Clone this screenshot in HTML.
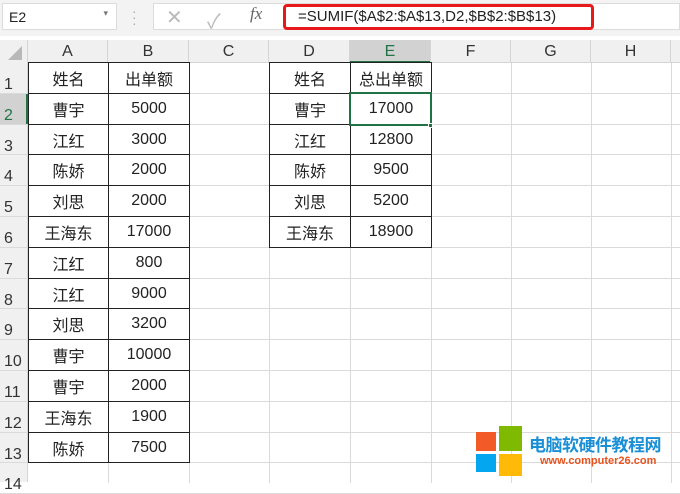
<!DOCTYPE html>
<html><head><meta charset="utf-8"><style>
body{margin:0;width:680px;height:482px;overflow:hidden;background:#fff;font-family:"Liberation Sans","Noto Sans CJK SC",sans-serif;position:relative}
.a{position:absolute;box-sizing:border-box}
.t{font-size:16px;color:#222;display:flex;align-items:center;justify-content:center}
</style></head><body>
<div class="a" style="left:0;top:0;width:680px;height:36px;background:#f3f3f3"></div>
<div class="a" style="left:2px;top:3px;width:115px;height:27px;background:#fff;border:1px solid #dcdcdc;font-size:14px;padding:5px 6px;color:#222">E2<span style="position:absolute;right:8px;top:4px;font-size:9px;color:#777">▾</span></div>
<div class="a" style="left:132px;top:8px;color:#aaa;font-size:14px;line-height:6px">·<br>·<br>·</div>
<div class="a" style="left:153px;top:3px;width:527px;height:27px;background:#fff;border:1px solid #dcdcdc"></div>
<div class="a" style="left:166px;top:5px;color:#bbb;font-size:20px">✕</div>
<div class="a" style="left:207px;top:5px;color:#bbb;font-size:20px">✓</div>
<div class="a" style="left:250px;top:4px;color:#666;font-size:17px;font-style:italic;font-family:'Liberation Serif',serif">fx</div>
<div class="a" style="left:283px;top:4px;width:311px;height:26px;border:3px solid #e8191a;border-radius:4px;font-size:15px;padding:1px 0 0 12px;color:#222">=SUMIF($A$2:$A$13,D2,$B$2:$B$13)</div>
<div class="a" style="left:0;top:40px;width:680px;height:23px;background:#f0f0f0;border-bottom:1px solid #d4d4d4"></div>
<div class="a" style="left:0;top:40px;width:28px;height:442px;background:#f0f0f0;border-right:1px solid #d4d4d4"></div>
<div class="a" style="left:8px;top:46px;width:0;height:0;border-left:14px solid transparent;border-bottom:14px solid #b8b8b8"></div>
<div class="a" style="left:350px;top:40px;width:81px;height:23px;background:#d2d2d2;border-bottom:2px solid #217346"></div>
<div class="a" style="left:0;top:94px;width:28px;height:31px;background:#d2d2d2;border-right:2px solid #217346"></div>
<div id="g"></div>
<script>
var cols=[28,108,189,269,350,431,511,591,671],names="ABCDEFGH",h='';
for(var i=0;i<8;i++){h+='<div class="a t" style="left:'+cols[i]+'px;top:40px;width:'+(cols[i+1]-cols[i])+'px;height:23px;font-size:16px;color:'+(i==4?'#217346':'#333')+';border-right:1px solid #d4d4d4">'+names[i]+'</div>';}
var rt=function(r){return Math.round(63+(r-1)*30.8)};
for(var r=1;r<=14;r++){h+='<div class="a t" style="left:0;top:'+rt(r)+'px;width:28px;height:31px;font-size:16px;color:'+(r==2?'#217346':'#333')+';justify-content:flex-start;padding:6px 0 0 4px;align-items:flex-end">'+r+'</div>';
h+='<div class="a" style="left:0;top:'+(rt(r+1)-1)+'px;width:680px;height:1px;background:#dadada"></div>';}
for(var i=1;i<9;i++)h+='<div class="a" style="left:'+cols[i]+'px;top:63px;width:1px;height:420px;background:#dadada"></div>';
var A=[["姓名","出单额"],["曹宇","5000"],["江红","3000"],["陈娇","2000"],["刘思","2000"],["王海东","17000"],["江红","800"],["江红","9000"],["刘思","3200"],["曹宇","10000"],["曹宇","2000"],["王海东","1900"],["陈娇","7500"]];
var D=[["姓名","总出单额"],["曹宇","17000"],["江红","12800"],["陈娇","9500"],["刘思","5200"],["王海东","18900"]];
function tb(data,c0){for(var r=0;r<data.length;r++)for(var c=0;c<2;c++){var x=cols[c0+c],w=cols[c0+c+1]-x;h+='<div class="a t" style="left:'+x+'px;top:'+(rt(r+1)-1)+'px;width:'+(w+1)+'px;height:'+(rt(r+2)-rt(r+1)+1)+'px;border:1px solid #222;background:#fff">'+data[r][c]+'</div>';}}
tb(A,0);tb(D,3);
h+='<div class="a" style="left:349px;top:'+(rt(2)-2)+'px;width:83px;height:'+(rt(3)-rt(2)+3)+'px;border:2px solid #217346"></div>';
h+='<div class="a" style="left:428px;top:'+(rt(3)-2)+'px;width:5px;height:5px;background:#217346;border:1px solid #fff"></div>';
document.getElementById('g').innerHTML=h;
</script>
<div class="a" style="left:476px;top:430px;width:46px;height:46px">
<div class="a" style="left:0;top:2px;width:20px;height:19px;background:#f25a27"></div>
<div class="a" style="left:23px;top:-4px;width:23px;height:25px;background:#7fba00"></div>
<div class="a" style="left:0;top:24px;width:20px;height:18px;background:#05a6f0"></div>
<div class="a" style="left:23px;top:24px;width:23px;height:22px;background:#ffba08"></div>
</div>
<div class="a" style="left:529px;top:431px;font-size:17px;font-weight:bold;color:#1a8fd6;white-space:nowrap;letter-spacing:-0.5px">电脑软硬件教程网</div>
<div class="a" style="left:540px;top:455px;font-size:11px;font-weight:bold;color:#e8531f;white-space:nowrap">www.computer26.com</div>
</body></html>
